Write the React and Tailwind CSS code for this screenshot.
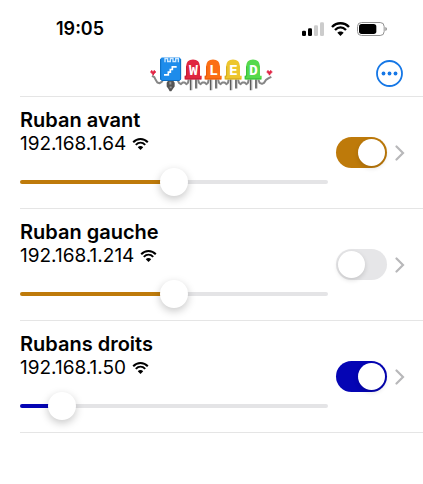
import { useState } from "react";

function Wifi({ className }) {
  return (
    <svg viewBox="0 0 57 42" className={className} fill="none" stroke="currentColor" aria-hidden="true">
      <path d="M3 15 C17 0 40 0 54 15" strokeWidth="7" />
      <path d="M12 24 C22 14 35 14 45 24" strokeWidth="7" />
      <path d="M28.500 42 L19 32.500 C24 27 33 27 38 32.500Z" fill="currentColor" stroke="none" />
    </svg>
  );
}

function StatusBar() {
  return (
    <div className="flex h-13 items-end justify-between pr-9 pb-[11px] pl-14">
      <span className="text-lg leading-6 font-semibold">19:05</span>
      <div className="flex h-6 items-center gap-[7px]">
        <svg viewBox="0 0 66 42" className="h-3.5 w-[22px]" aria-label="Signal">
          <rect x="0" y="26" width="12" height="16" rx="4" />
          <rect x="18" y="19" width="12" height="23" rx="4" />
          <rect x="36" y="10" width="12" height="32" rx="4" fill="#cccccc" />
          <rect x="54" y="1" width="12" height="41" rx="4" fill="#cccccc" />
        </svg>
        <Wifi className="h-3.5 w-[19px]" />
        <svg viewBox="0 0 90 42" className="h-3.5 w-[30px]" aria-label="Battery">
          <rect x="1.500" y="1.500" width="80" height="39" rx="12" fill="none" stroke="#929292" strokeWidth="3" />
          <rect x="6" y="6" width="52" height="30" rx="8" />
          <path d="M85 15 Q90 17 90 21 Q90 25 85 27Z" fill="#929292" />
        </svg>
      </div>
    </div>
  );
}

const leds = [
  { x: 123, fill: "#e0263f", edge: "#c01c35", letter: "W" },
  { x: 183, fill: "#fb6e14", edge: "#e65a08", letter: "L" },
  { x: 243, fill: "#edc62e", edge: "#d4a91e", letter: "E" },
  { x: 303, fill: "#55d94c", edge: "#37bd38", letter: "D" },
];

function Heart({ x, y }) {
  return (
    <path
      transform={`translate(${x} ${y})`}
      d="M0 3h2v-3h4v3h4v-3h4v3h3v5h-3v3h-3v4h-5v-4h-3v-3h-3z"
      fill="#e22545"
    />
  );
}

function Logo() {
  return (
    <svg viewBox="18 18 369 110" className="h-[37px] w-[123px]" role="img" aria-label="WLED">
      <g fill="none" stroke="#868686" strokeWidth="6" strokeLinejoin="round">
        <path d="M24 80l7 4l4 8l5 8l7 2l6-4l5-7" />
        <path d="M100 91l5 10l6 4l5-5h6l5 5l5-4l2-10" />
        <path d="M162 91l3 10l5 4l5-5h7l5 5l5-4l2-10" />
        <path d="M222 91l3 10l5 4l5-5h7l5 5l5-4l2-10" />
        <path d="M282 91l3 10l5 4l5-5h7l5 5l5-4l2-10" />
        <path d="M343 91l4 10l7 3l6-3l6-9l8-5l8-4" />
      </g>
      <path d="M73 93h14l5 8v11l-5 7l-5 7h-5l-4-7l-5-7v-11z" fill="#555555" />
      <path d="M76 98h6v8h-6zM77 112h6v5h-6z" fill="#969696" />
      <path d="M53 25h54l4 5v60l-4 5h-54l-5-5v-60z" fill="#1e8ceb" />
      <path d="M50 30v60l4 4h52l4-4v-60" fill="none" stroke="#0d6dc1" strokeWidth="3" />
      <path d="M63 39v-11h8v9h8v-9h8v9h8v-9h8v11" fill="none" stroke="#cee8ff" strokeWidth="4" />
      <path d="M60 77h13v-8h6v-8h6v-8h13" fill="none" stroke="#ffffff" strokeWidth="5" />
      <Heart x="19" y="63" />
      {leds.map((led) => (
        <g key={led.letter} transform={`translate(${led.x} 0)`}>
          <path d="M17 90v33M33 90v28" stroke="#5c5c5c" strokeWidth="5" />
          <path d="M21 90v33M37 90v28" stroke="#b0b0b0" strokeWidth="2" />
          <path d="M3 52Q4 31 24 31Q44 31 45 52V80h5v11h-51v-11h4z" fill={led.fill} />
          <path d="M5 52V81h-4v8h47" fill="none" stroke={led.edge} strokeWidth="3" />
          <text
            x="25"
            y="78"
            textAnchor="middle"
            fill="#ffffff"
            className="font-['DejaVu_Sans_Mono',monospace] text-[44px] font-bold"
          >
            {led.letter}
          </text>
        </g>
      ))}
      <Heart x="368" y="63" />
    </svg>
  );
}

function Header() {
  return (
    <header className="ml-5 grid h-[45px] grid-cols-[1fr_auto_1fr] items-center border-b border-[#e5e5e5] pr-5 pb-0.5">
      <span />
      <Logo />
      <button aria-label="Menu" className="justify-self-end text-[#1577e6]">
        <svg viewBox="0 0 27 27" className="size-[27px]" fill="currentColor">
          <circle cx="13.500" cy="13.500" r="12.500" fill="none" stroke="currentColor" strokeWidth="1.800" />
          <circle cx="7.500" cy="13.500" r="1.900" />
          <circle cx="13.500" cy="13.500" r="1.900" />
          <circle cx="19.500" cy="13.500" r="1.900" />
        </svg>
      </button>
    </header>
  );
}

function Device({ name, ip, color, level, on }) {
  const [value, setValue] = useState(level);
  const [checked, setChecked] = useState(on);
  const fill = `calc(14px + (100% - 28px) * ${value / 100})`;
  return (
    <li className="ml-5 flex h-28 items-center border-b border-[#e5e5e5] pr-[18px]">
      <div className="min-w-0 flex-1 self-start pt-[11px]">
        <h2 className="text-xl leading-6 font-semibold">{name}</h2>
        <p className="flex items-center gap-1.5 text-[19px] leading-6">
          {ip}
          <Wifi className="h-3 w-[17px]" />
        </p>
        <div className="flex h-13 items-center">
          <input
            type="range"
            aria-label={`${name} brightness`}
            value={value}
            onChange={(e) => setValue(Number(e.target.value))}
            style={{ background: `linear-gradient(to right, ${color} ${fill}, #e4e4e6 ${fill})` }}
            className="h-1 w-full appearance-none rounded-full [&::-webkit-slider-thumb]:size-7 [&::-webkit-slider-thumb]:appearance-none [&::-webkit-slider-thumb]:rounded-full [&::-webkit-slider-thumb]:bg-white [&::-webkit-slider-thumb]:shadow-[0_3px_8px_rgba(0,0,0,0.22)]"
          />
        </div>
      </div>
      <input
        type="checkbox"
        role="switch"
        aria-label={`${name} power`}
        checked={checked}
        onChange={(e) => setChecked(e.target.checked)}
        style={{ backgroundColor: checked ? color : "#e6e6e8" }}
        className="ml-2 h-[31px] w-[51px] shrink-0 appearance-none rounded-full p-0.5 before:block before:size-[27px] before:rounded-full before:bg-white before:shadow-[0_2px_5px_rgba(0,0,0,0.15)] checked:before:ml-5"
      />
      <button aria-label={`Open ${name}`} className="ml-2 text-[#b8b8ba]">
        <svg viewBox="0 0 10 16" className="h-4 w-2.5" fill="none" stroke="currentColor" strokeWidth="2.200">
          <path d="M1.500 1.500 L8 8 L1.500 14.500" strokeLinecap="round" />
        </svg>
      </button>
    </li>
  );
}

const devices = [
  { name: "Ruban avant", ip: "192.168.1.64", color: "#be7a0a", level: 50, on: true },
  { name: "Ruban gauche", ip: "192.168.1.214", color: "#be7a0a", level: 50, on: false },
  { name: "Rubans droits", ip: "192.168.1.50", color: "#0505b4", level: 10, on: true },
];

export default function App() {
  return (
    <main className="min-h-screen bg-white font-['Inter',sans-serif] text-black">
      <StatusBar />
      <Header />
      <ul>
        {devices.map((device) => (
          <Device key={device.ip} {...device} />
        ))}
      </ul>
    </main>
  );
}
